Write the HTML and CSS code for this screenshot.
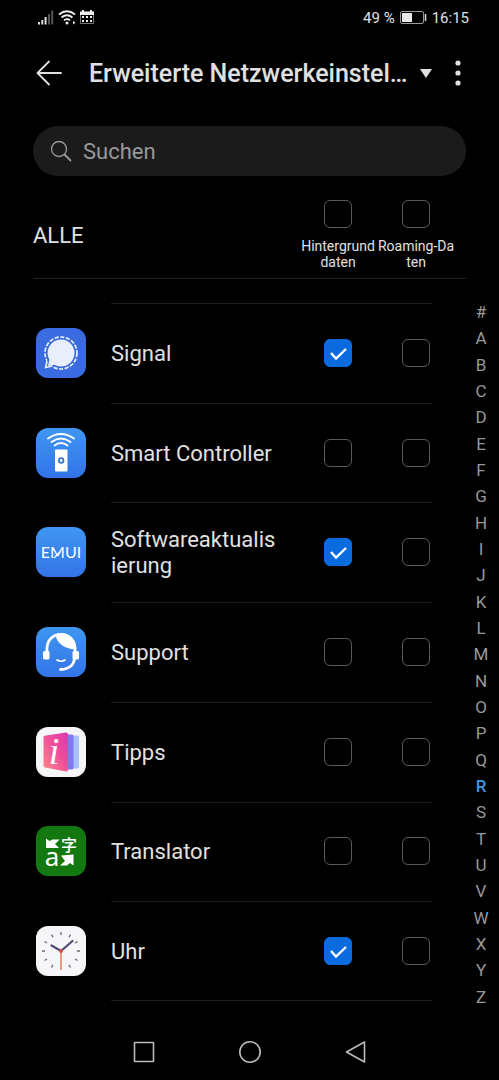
FILE: index.html
```html
<!DOCTYPE html>
<html lang="de">
<head>
    <meta charset="UTF-8">
    <meta name="viewport" content="width=device-width, initial-scale=1.0">
    <title>Erweiterte Netzwerkeinstellungen</title>
    <link rel="stylesheet" href="styles.css">
</head>
<body>
    <div class="status-bar">
        <div class="status-icons">
            <svg width="16" height="15" viewBox="0 0 16 15">
                <path fill="#ddd" d="M0 12h2v2.500H0zM3.300 10h2v4.500h-2zM6.600 7h2v7.500h-2z"/>
                <path fill="#555" d="M10 4h2v10.500h-2zM13.200 0.500h2v14h-2z"/>
            </svg>
            <svg width="18" height="15" viewBox="0 0 18 15">
                <path d="M1 4.500Q9 -2 17 4.500M3.500 7.500Q9 3 14.500 7.500M6 10.200Q9 8 12 10.200" fill="none" stroke="#eee" stroke-width="1.900"/>
                <circle cx="9" cy="13" r="1.500" fill="#eee"/>
                <path d="M15 11l2.500 1.700-2.500 1.700z" fill="#eee"/>
            </svg>
            <svg width="14" height="14" viewBox="0 0 14 14">
                <path fill="#eee" d="M0 1.500h2V0h2v1.500h6V0h2v1.500h2V5H0z"/>
                <path d="M0.500 5v8.500h13V5" fill="none" stroke="#777"/>
                <path fill="#eee" d="M2 6h2v2H2zM6 6h2v2H6zM10 6h2v2h-2zM2 10h2v2H2zM6 10h2v2H6zM10 10h2v2h-2z"/>
            </svg>
        </div>
        <div class="status-info">
            <span>49 %</span>
            <svg width="27" height="13" viewBox="0 0 27 13">
                <rect x="0.500" y="0.500" width="23" height="12" rx="1.500" fill="none" stroke="#999"/>
                <rect x="2" y="2" width="10" height="9" fill="#e8e8e8"/>
                <path d="M25.500 3v7" stroke="#ddd" stroke-width="1.500"/>
            </svg>
            <span>16:15</span>
        </div>
    </div>

    <header class="title-bar">
        <button class="icon-btn" aria-label="Zurück">
            <svg width="26" height="26" viewBox="0 0 26 26">
                <path d="M13 1.500L1.500 13L13 24.500M1.500 13H25" fill="none" stroke="#e0e0e0" stroke-width="1.800" stroke-linecap="round" stroke-linejoin="round"/>
            </svg>
        </button>
        <h1>Erweiterte Netzwerkeinstellungen</h1>
        <button class="icon-btn dropdown-btn" aria-label="Ansicht wechseln">
            <svg width="12" height="9" viewBox="0 0 12 9"><path d="M0 0h12L6 9z" fill="#e0e0e0"/></svg>
        </button>
        <button class="icon-btn" aria-label="Mehr">
            <svg width="6" height="26" viewBox="0 0 6 26">
                <g fill="#e0e0e0"><circle cx="3" cy="3" r="2.600"/><circle cx="3" cy="13" r="2.600"/><circle cx="3" cy="23" r="2.600"/></g>
            </svg>
        </button>
    </header>

    <label class="search">
        <svg width="22" height="22" viewBox="0 0 22 22">
            <path d="M14.500 14.500L20.500 20.500" stroke="#999" stroke-width="1.800" stroke-linecap="round"/>
            <circle cx="9" cy="9" r="7.500" fill="none" stroke="#999" stroke-width="1.300"/>
        </svg>
        <input type="search" placeholder="Suchen" aria-label="Suchen">
    </label>

    <section class="all-row">
        <h2>ALLE</h2>
        <div class="all-option">
            <input type="checkbox" id="all-background">
            <label for="all-background">Hintergrunddaten</label>
        </div>
        <div class="all-option">
            <input type="checkbox" id="all-roaming">
            <label for="all-roaming">Roaming-Daten</label>
        </div>
    </section>

    <main>
        <ul class="app-list">
            <li>
                <svg class="app-icon" viewBox="0 0 50 50">
                    <rect width="50" height="50" fill="#3b6be0"/>
                    <circle cx="25" cy="25" r="16" fill="none" stroke="#e8eefc" stroke-width="1.700" stroke-dasharray="4.200 1.500"/>
                    <path d="M9.500 39l2-8 7 6z" fill="#3b6be0"/>
                    <path d="M11 33l-1.300 6.500 6.500-1.500" fill="none" stroke="#e8eefc" stroke-width="1.700"/>
                    <path d="M25 11.500a13.500 13.500 0 1 1-6.500 25.300L12 38l1.300-6.300A13.500 13.500 0 0 1 25 11.500z" fill="#e8eefc"/>
                </svg>
                <span class="app-name">Signal</span>
                <input type="checkbox" checked aria-label="Signal Hintergrunddaten">
                <input type="checkbox" aria-label="Signal Roaming-Daten">
            </li>
            <li>
                <svg class="app-icon" viewBox="0 0 50 50">
                    <defs>
                        <linearGradient id="blue" x1="0" y1="0" x2="0" y2="1"><stop offset="0" stop-color="#3f96f2"/><stop offset="1" stop-color="#3374e8"/></linearGradient>
                    </defs>
                    <rect width="50" height="50" fill="url(#blue)"/>
                    <path d="M12 10.500Q25 1.500 38 10.500M15.500 14Q25 7 34.500 14M18.500 17.500Q25 12.500 31.500 17.500" fill="none" stroke="#fff" stroke-width="1.900" stroke-linecap="round"/>
                    <rect x="19" y="21.500" width="12.500" height="22" rx="0.800" fill="#fff"/>
                    <circle cx="25.200" cy="32.500" r="2.300" fill="none" stroke="#3b75ce" stroke-width="1.800"/>
                </svg>
                <span class="app-name">Smart Controller</span>
                <input type="checkbox" aria-label="Smart Controller Hintergrunddaten">
                <input type="checkbox" aria-label="Smart Controller Roaming-Daten">
            </li>
            <li>
                <svg class="app-icon" viewBox="0 0 50 50">
                    <rect width="50" height="50" fill="url(#blue)"/>
                    <text x="25" y="31" class="emui-text">EMUI</text>
                    <path d="M18 31l6-6" stroke="#fff" stroke-width="1.200"/>
                </svg>
                <span class="app-name">Softwareaktualisierung</span>
                <input type="checkbox" checked aria-label="Softwareaktualisierung Hintergrunddaten">
                <input type="checkbox" aria-label="Softwareaktualisierung Roaming-Daten">
            </li>
            <li>
                <svg class="app-icon" viewBox="0 0 50 50">
                    <rect width="50" height="50" fill="url(#blue)"/>
                    <path d="M11 25C10 13 17 7.300 25 7.300S40 13 39 25" fill="none" stroke="#fff" stroke-width="2.800"/>
                    <path d="M20 10C22 17 29 21.500 38.500 22.500C39 13 33 7 25 7C23 7 21 8 20 10z" fill="#fff"/>
                    <rect x="7" y="24" width="6.500" height="8.500" rx="1.500" fill="#fff"/>
                    <rect x="36.500" y="24" width="6.500" height="8.500" rx="1.500" fill="#fff"/>
                    <path d="M38.500 31C38 38.500 33 42 24.500 42.500" fill="none" stroke="#fff" stroke-width="2.800" stroke-linecap="round"/>
                    <path d="M21 33Q25 35.500 29 33" fill="none" stroke="#fff" stroke-width="1.700" stroke-linecap="round"/>
                </svg>
                <span class="app-name">Support</span>
                <input type="checkbox" aria-label="Support Hintergrunddaten">
                <input type="checkbox" aria-label="Support Roaming-Daten">
            </li>
            <li>
                <svg class="app-icon" viewBox="0 0 50 50">
                    <defs>
                        <linearGradient id="cover" x1="0" y1="1" x2="1" y2="0"><stop offset="0" stop-color="#ff8a86"/><stop offset="0.550" stop-color="#ef4d9a"/><stop offset="1" stop-color="#dc39ae"/></linearGradient>
                    </defs>
                    <rect width="50" height="50" fill="#f6f5f7"/>
                    <path d="M32 8.500h9.500q1.500 0 1.500 1.500v30q0 1.500-1.500 1.500H32z" fill="#a5c2fb"/>
                    <path d="M28 7.500h8q1.500 0 1.500 1.500v32q0 1.500-1.500 1.500h-8z" fill="#8676ef"/>
                    <path d="M8.500 8.800L30 5.500q2 0 2 1.800v35.500q0 2-2 1.700L9 40.500q-1.500-0.500-1.500-2V10.500q0-1.500 1-1.700z" fill="url(#cover)"/>
                    <text x="18" y="37" class="tips-text">i</text>
                </svg>
                <span class="app-name">Tipps</span>
                <input type="checkbox" aria-label="Tipps Hintergrunddaten">
                <input type="checkbox" aria-label="Tipps Roaming-Daten">
            </li>
            <li>
                <svg class="app-icon" viewBox="0 0 50 50">
                    <rect width="50" height="50" fill="#12780f"/>
                    <path d="M10 12.500l3.500 2.500 3-1.500h7L19 18l4 4H10z" fill="#fff"/>
                    <path d="M37.500 28.500v11l-3.500-2.500-3 2.500h-7l5-4.500-4-5.500z" fill="#fff"/>
                    <text x="16" y="40" class="letter-text">a</text>
                    <text x="33" y="25" class="hanzi-text">字</text>
                </svg>
                <span class="app-name">Translator</span>
                <input type="checkbox" aria-label="Translator Hintergrunddaten">
                <input type="checkbox" aria-label="Translator Roaming-Daten">
            </li>
            <li>
                <svg class="app-icon" viewBox="0 0 50 50">
                    <rect width="50" height="50" fill="#f6f6f8"/>
                    <path d="M25 6v3M34.500 8.600l-1.500 2.600M41.500 15.500l-2.600 1.500M44 25h-3M41.500 34.500l-2.600-1.500M34.500 41.500L33 38.900M15.500 41.500l1.500-2.600M8.500 34.500l2.600-1.500M6 25h3M8.500 15.500l2.600 1.500M15.500 8.600l1.500 2.600" stroke="#666a78" stroke-width="1.300"/>
                    <path d="M15.500 19.500L25 25L36.500 15" fill="none" stroke="#4a4c75" stroke-width="2.200" stroke-linecap="round"/>
                    <path d="M25 25v19" stroke="#e58b68" stroke-width="1.700"/>
                    <circle cx="25" cy="25" r="2" fill="#cc5448"/>
                </svg>
                <span class="app-name">Uhr</span>
                <input type="checkbox" checked aria-label="Uhr Hintergrunddaten">
                <input type="checkbox" aria-label="Uhr Roaming-Daten">
            </li>
        </ul>

        <nav class="alphabet" aria-label="Alphabet">
            <a href="#">#</a>
            <a href="#">A</a>
            <a href="#">B</a>
            <a href="#">C</a>
            <a href="#">D</a>
            <a href="#">E</a>
            <a href="#">F</a>
            <a href="#">G</a>
            <a href="#">H</a>
            <a href="#">I</a>
            <a href="#">J</a>
            <a href="#">K</a>
            <a href="#">L</a>
            <a href="#">M</a>
            <a href="#">N</a>
            <a href="#">O</a>
            <a href="#">P</a>
            <a href="#">Q</a>
            <a href="#" class="active">R</a>
            <a href="#">S</a>
            <a href="#">T</a>
            <a href="#">U</a>
            <a href="#">V</a>
            <a href="#">W</a>
            <a href="#">X</a>
            <a href="#">Y</a>
            <a href="#">Z</a>
        </nav>
    </main>

    <footer class="nav-bar">
        <button class="icon-btn" aria-label="Letzte Apps">
            <svg width="22" height="22" viewBox="0 0 22 22"><rect x="1.500" y="1.500" width="19" height="19" rx="0.500" fill="none" stroke="#bbb" stroke-width="1.600"/></svg>
        </button>
        <button class="icon-btn" aria-label="Startbildschirm">
            <svg width="22" height="22" viewBox="0 0 22 22"><circle cx="11" cy="11" r="10.200" fill="none" stroke="#bbb" stroke-width="1.600"/></svg>
        </button>
        <button class="icon-btn" aria-label="Zurück">
            <svg width="22" height="22" viewBox="0 0 22 22"><path d="M19.500 1v20L1.500 11z" fill="none" stroke="#bbb" stroke-width="1.600" stroke-linejoin="round"/></svg>
        </button>
    </footer>
</body>
</html>
```
FILE: styles.css
```css
/* Base Styles */
* {
    box-sizing: border-box;
}

body {
    margin: 0;
    min-height: 100vh;
    display: flex;
    flex-direction: column;
    font-family: Roboto, 'Noto Sans CJK SC', sans-serif;
    background: black;
    color: #e0e0e0;
}

h1,
h2 {
    margin: 0;
}

svg {
    display: block;
    flex-shrink: 0;
}

.icon-btn {
    padding: 0;
    border: none;
    background: none;
    cursor: pointer;
}

/* Status Bar */
.status-bar {
    display: flex;
    justify-content: space-between;
    align-items: center;
    height: 35px;
    padding: 0 30px 0 38px;
    font-size: 15px;
}

.status-icons {
    display: flex;
    gap: 4px;
}

.status-info {
    display: flex;
    align-items: center;
    gap: 5px;
}

/* Title Bar */
.title-bar {
    display: flex;
    align-items: center;
    height: 76px;
    padding: 0 38px 0 36px;
}

.title-bar h1 {
    flex: 1;
    min-width: 0;
    margin-left: 27px;
    overflow: hidden;
    white-space: nowrap;
    text-overflow: ellipsis;
    font-size: 25px;
    font-weight: 500;
}

.dropdown-btn {
    margin: 0 23px 0 10px;
}

/* Search */
.search {
    display: flex;
    align-items: center;
    gap: 11px;
    height: 50px;
    margin: 15px 33px 0;
    padding: 0 17px;
    border-radius: 25px;
    background: #1b1b1b;
}

.search input {
    flex: 1;
    min-width: 0;
    padding: 0;
    border: none;
    outline: none;
    background: none;
    color: #e0e0e0;
    font: 22px Roboto, sans-serif;
}

.search input::placeholder {
    color: #999;
}

/* Checkboxes */
input[type="checkbox"] {
    appearance: none;
    display: block;
    width: 28px;
    height: 28px;
    margin: 0;
    border: 1px solid #5a5a5a;
    border-radius: 6px;
    justify-self: center;
    cursor: pointer;
}

input[type="checkbox"]:checked {
    border-color: #0a6bdf;
    background: #0a6bdf url("data:image/svg+xml,%3Csvg xmlns='http://www.w3.org/2000/svg' viewBox='0 0 26 26'%3E%3Cpath d='M6 13l5 5.500L21 9' fill='none' stroke='white' stroke-width='2.400'/%3E%3C/svg%3E") center / 26px no-repeat;
}

/* Select All */
.all-row {
    display: grid;
    grid-template-columns: 1fr 78px 78px;
    margin: 0 33px;
    padding: 24px 11px 8px 0;
    border-bottom: 1px solid #222;
}

.all-row h2 {
    align-self: center;
    font-size: 22px;
    font-weight: 400;
}

.all-option {
    display: flex;
    flex-direction: column;
    align-items: center;
    gap: 10px;
}

.all-option label {
    font-size: 14px;
    line-height: 16px;
    text-align: center;
    word-break: break-all;
}

/* App List */
main {
    flex: 1;
    display: flex;
}

.app-list {
    flex: 1;
    display: flex;
    flex-direction: column;
    margin: 0;
    padding: 24px 0 9px 36px;
    list-style: none;
}

/* Divider starts at the app name and ends at the last checkbox */
.app-list li {
    --divider: linear-gradient(#1c1c1c, #1c1c1c);
    flex: 1;
    display: grid;
    grid-template-columns: 50px 1fr 78px 78px;
    align-items: center;
    min-height: 80px;
    background: var(--divider) 75px 0 / calc(100% - 98px) 1px no-repeat;
}

.app-list li:last-child {
    background:
        var(--divider) 75px 0 / calc(100% - 98px) 1px no-repeat,
        var(--divider) 75px 100% / calc(100% - 98px) 1px no-repeat;
}

.app-icon {
    width: 50px;
    height: 50px;
    border-radius: 12px;
}

.app-name {
    padding: 2px 21px 0 25px;
    font-size: 22px;
    line-height: 26px;
    word-break: break-all;
}

.emui-text {
    fill: white;
    font: 16px Lato, sans-serif;
    text-anchor: middle;
}

.tips-text {
    fill: white;
    font: italic 38px 'Liberation Serif', serif;
    text-anchor: middle;
}

.letter-text {
    fill: white;
    font: 26px 'Noto Sans', sans-serif;
    text-anchor: middle;
}

.hanzi-text {
    fill: white;
    font: 500 16px 'Noto Sans CJK SC', sans-serif;
    text-anchor: middle;
}

/* Alphabet Index */
.alphabet {
    display: flex;
    flex-direction: column;
    width: 36px;
    margin-left: 8px;
    padding-top: 20px;
}

.alphabet a {
    flex: 1;
    display: flex;
    align-items: center;
    justify-content: center;
    color: #999;
    font-size: 17px;
    line-height: 20px;
    text-decoration: none;
}

.alphabet .active {
    color: #3f97e8;
    font-weight: 500;
}

/* Navigation Bar */
.nav-bar {
    display: flex;
    justify-content: center;
    align-items: center;
    gap: 84px;
    height: 70px;
    padding-top: 14px;
}
```
